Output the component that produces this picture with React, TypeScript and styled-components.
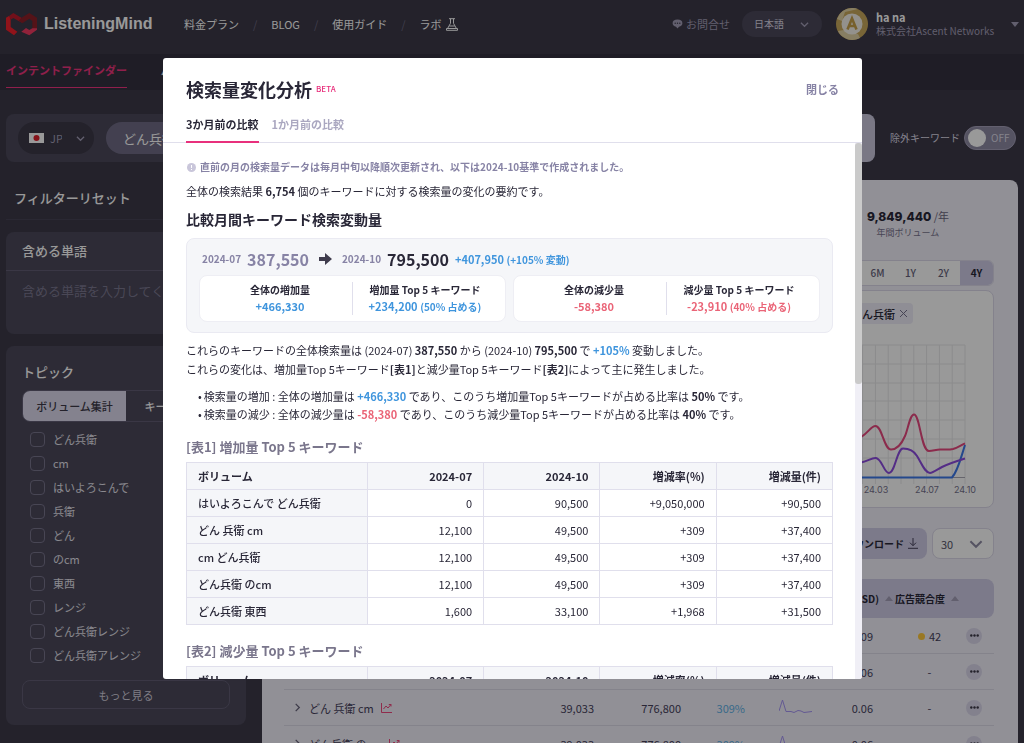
import React from 'react';
import styled, { createGlobalStyle, css } from 'styled-components';

const color = {
  page: '#3c3948',
  pageDeep: '#343140',
  panel: '#4b485a',
  line: '#615d74',
  muted: '#a39eb7',
  lilac: '#dcd9ed',
  accent: '#e8307c',
  ink: '#292737',
  violet: '#8783a5',
  up: '#3f95dd',
  down: '#ea6477',
  soft: '#f5f6f9',
  rule: '#e0dfec',
};

const GlobalStyle = createGlobalStyle`
  *, *::before, *::after { box-sizing: border-box; }
  html, body { margin: 0; height: 100%; overflow: hidden; }
  body {
    background: ${color.page};
    color: #fff;
    font: 11px/16px "Noto Sans CJK JP", "Noto Sans", sans-serif;
  }
  button, input, select, textarea { font: inherit; color: inherit; margin: 0; }
  button { border: 0; padding: 0; background: none; cursor: pointer; }
  a { color: inherit; text-decoration: none; }
  h1, h2, h3, p, ul { margin: 0; padding: 0; }
`;

/* ---------- top bar ---------- */

const TopBar = styled.header`
  display: flex;
  align-items: center;
  height: 54px;
  padding: 0 5px 6px 6px;
`;

const Brand = styled.a`
  display: flex;
  align-items: center;
  gap: 6px;
  width: 178px;
  font: bold 16px/20px "Liberation Sans", sans-serif;
`;

const TopNav = styled.nav`
  display: flex;
  align-items: center;
  gap: 14px;
  flex: 1;
  white-space: nowrap;
`;

const Slash = styled.span`
  color: #6c6880;
`;

const LabLink = styled.a`
  display: flex;
  align-items: center;
  gap: 4px;
`;

const Contact = styled.a`
  display: flex;
  align-items: center;
  gap: 3px;
  margin-right: 12px;
  color: ${color.muted};
`;

const PickWrap = styled.label`
  position: relative;
  display: flex;
  align-items: center;
`;

const PickIcon = styled.span<{ $right: number }>`
  position: absolute;
  right: ${(p) => p.$right}px;
  display: flex;
  pointer-events: none;
`;

const LanguageSelect = styled.select`
  appearance: none;
  width: 80px;
  height: 26px;
  padding: 0 12px;
  border: 0;
  border-radius: 13px;
  background: ${color.panel};
  color: #dddae8;
  font-size: 10px;
`;

const Account = styled.button`
  display: flex;
  align-items: center;
  gap: 8px;
  margin-left: 14px;
  text-align: left;
`;

const AccountName = styled.strong`
  display: block;
  font-size: 11px;
  line-height: 14px;
`;

const AccountOrg = styled.span`
  display: block;
  width: 127px;
  color: ${color.muted};
  font-size: 10px;
  line-height: 14px;
`;

/* ---------- product tabs + search ---------- */

const ProductTabs = styled.nav`
  display: flex;
  gap: 34px;
  height: 36px;
  padding: 0 6px;
  background: ${color.pageDeep};
`;

const ProductTab = styled.a<{ $active?: boolean }>`
  height: 34px;
  line-height: 32px;
  font-weight: bold;
  color: ${(p) => (p.$active ? '#f0357f' : '#fff')};
  border-bottom: 1px solid ${(p) => (p.$active ? '#f0357f' : 'transparent')};
`;

const SearchRow = styled.div`
  display: flex;
  align-items: center;
  gap: 15px;
  padding: 24px 8px 18px 6px;
`;

const SearchBox = styled.form`
  display: flex;
  align-items: center;
  gap: 12px;
  flex: 1;
  height: 48px;
  padding-left: 12px;
  border-radius: 8px;
  background: ${color.panel};
  overflow: hidden;
`;

const CountrySelect = styled.select`
  appearance: none;
  width: 76px;
  height: 32px;
  padding: 0 32px;
  border: 0;
  border-radius: 16px;
  background: ${color.page};
  color: ${color.muted};
`;

const Flag = styled.svg`
  position: absolute;
  left: 11px;
`;

const SearchInput = styled.input`
  flex: 1;
  height: 32px;
  padding: 0 17px;
  border: 0;
  border-radius: 16px;
  background: #706c86;
  font-size: 13px;
`;

const SearchButton = styled.button`
  width: 56px;
  height: 48px;
  background: #cbc8de;
`;

const Exclude = styled.label`
  display: flex;
  align-items: center;
  gap: 4px;
  font-size: 10px;
  white-space: nowrap;
  color: #dddae8;
`;

const Switch = styled.span`
  display: flex;
  align-items: center;
  gap: 5px;
  width: 52px;
  height: 24px;
  padding: 0 3px;
  border: 1px solid #a5a1ba;
  border-radius: 12px;
  background: #8e8aa3;
`;

const SwitchInput = styled.input`
  appearance: none;
  width: 18px;
  height: 18px;
  border-radius: 9px;
  background: #fff;
`;

/* ---------- sidebar ---------- */

const Columns = styled.div`
  display: flex;
  align-items: flex-start;
  gap: 16px;
  padding: 0 6px;
`;

const Sidebar = styled.aside`
  display: flex;
  flex-direction: column;
  gap: 12px;
  width: 240px;
`;

const ResetBar = styled.div`
  height: 40px;
  padding: 0 8px;
  border-bottom: 1px solid #474455;
`;

const ResetButton = styled.button`
  font-size: 13px;
  font-weight: 500;
  line-height: 36px;
`;

const Panel = styled.section`
  border-radius: 8px;
  background: ${color.panel};
`;

const PanelTitle = styled.h2`
  font-size: 13px;
  font-weight: 500;
  line-height: 20px;
`;

const IncludeHead = styled.div`
  padding: 9px 16px;
  border-bottom: 1px solid ${color.line};
`;

const IncludeInput = styled.textarea`
  display: block;
  width: 100%;
  height: 63px;
  padding: 10px 16px;
  border: 0;
  resize: none;
  overflow: hidden;
  background: none;
  font-size: 13px;
  line-height: 20px;
  white-space: nowrap;
  &::placeholder { color: #7c7890; }
`;

const TopicPanel = styled(Panel)`
  padding: 16px;
`;

const Segments = styled.div`
  display: flex;
  height: 32px;
  margin: 8px 0 5px;
  border: 1px solid ${color.line};
  border-radius: 8px;
  overflow: hidden;
`;

const Segment = styled.button<{ $active?: boolean }>`
  flex: 1;
  font-weight: 500;
  ${(p) => p.$active && css`
    background: ${color.lilac};
    color: #3c3948;
  `}
`;

const Topic = styled.label`
  display: flex;
  align-items: center;
  gap: 8px;
  height: 24px;
  padding-left: 8px;
  color: #e6e4ee;
`;

const Check = styled.input`
  appearance: none;
  width: 15px;
  height: 15px;
  border: 1px solid #79758d;
  border-radius: 4px;
`;

const MoreButton = styled.button`
  display: block;
  width: 100%;
  height: 29px;
  margin-top: 13px;
  border: 1px solid ${color.line};
  border-radius: 8px;
  color: #d3d0de;
`;

/* ---------- results ---------- */

const Results = styled.main`
  flex: 1;
  display: flex;
  flex-direction: column;
  align-items: flex-end;
  padding: 26px 24px 40px 22px;
  border-radius: 8px;
  background: #f2f0fa;
  color: ${color.ink};
`;

const Stat = styled.div`
  margin-right: 45px;
  text-align: center;
`;

const StatValue = styled.div`
  font: 11px/20px "Noto Sans CJK JP", sans-serif;
  color: #6c6880;
  strong { font: 800 12px/20px Inter, sans-serif; color: ${color.ink}; }
`;

const StatLabel = styled.div`
  font-size: 9px;
  line-height: 12px;
  color: #77738e;
`;

const Periods = styled.div`
  display: flex;
  height: 26px;
  margin: 21px 0 4px;
  border: 1px solid #dcd9ea;
  border-radius: 6px;
  background: #fff;
  overflow: hidden;
`;

const Period = styled.button<{ $active?: boolean }>`
  width: 33px;
  font-size: 10px;
  font-weight: 500;
  color: ${(p) => (p.$active ? color.ink : '#66627a')};
  background: ${(p) => (p.$active ? '#cfcce6' : 'none')};
  ${(p) => p.$active && css`font-weight: bold;`}
`;

const ChartCard = styled.section`
  display: flex;
  flex-direction: column;
  align-items: flex-end;
  align-self: stretch;
  padding: 12px 0 6px;
  border: 1px solid #dcd9ea;
  border-radius: 8px;
  background: #fff;
`;

const Chip = styled.span`
  display: flex;
  align-items: center;
  gap: 4px;
  height: 21px;
  margin: 0 80px 15px 0;
  padding: 0 5px 0 8px;
  border-radius: 4px;
  background: #efedf8;
  font-weight: 500;
`;

const ChartSpace = styled.div`
  display: flex;
  margin-right: 8px;
`;

const IconButton = styled.button`
  display: flex;
`;

const Toolbar = styled.div`
  display: flex;
  gap: 5px;
  margin: 20px 0;
`;

const DownloadButton = styled.button`
  display: flex;
  align-items: center;
  gap: 4px;
  height: 31px;
  padding: 0 9px 0 12px;
  border-radius: 8px;
  background: #cfcce6;
  font-size: 10px;
  font-weight: bold;
`;

const SizeSelect = styled.select`
  appearance: none;
  width: 62px;
  height: 31px;
  padding: 0 8px;
  border: 1px solid #dcd9ea;
  border-radius: 8px;
  background: #fff;
  font-size: 11px;
  color: #575368;
`;

const ResultTable = styled.table`
  width: 100%;
  table-layout: fixed;
  border-spacing: 0;
  white-space: nowrap;
  thead th {
    height: 39px;
    padding: 0;
    background: #cfcce6;
    font-size: 10px;
    text-align: left;
  }
  thead th:first-child { border-radius: 8px 0 0 8px; padding-left: 24px; }
  thead th:last-child { border-radius: 0 8px 8px 0; }
  tbody td {
    height: 36px;
    padding: 0;
    border-bottom: 1px solid #dddbe8;
    color: #45415a;
    text-align: right;
  }
  tbody td:first-child { text-align: left; }
`;

const KeywordCell = styled.div`
  display: flex;
  align-items: center;
  gap: 7px;
  padding-left: 9px;
`;

const Rise = styled.td`
  && { color: #5fb0e6; }
`;

const SparkCell = styled.td`
  && { text-align: center; }
`;

const CpcCell = styled.td`
  && { padding-right: 20px; }
`;

const CpcHead = styled.th`
  direction: rtl;
`;

const HeadLabel = styled.span`
  display: inline-flex;
  align-items: center;
  gap: 6px;
  direction: ltr;
  padding-left: 2px;
`;

const RankCell = styled.td`
  && { text-align: center; }
`;

const Rank = styled.span`
  display: inline-flex;
  align-items: center;
  gap: 4px;
`;

const Dot = styled.i`
  width: 7px;
  height: 7px;
  border-radius: 4px;
  background: #ffc93c;
`;

const MenuButton = styled.button`
  display: flex;
  align-items: center;
  justify-content: center;
  width: 16px;
  height: 16px;
  border-radius: 8px;
  background: #dbd8ec;
`;

/* ---------- dialog ---------- */

const Backdrop = styled.div`
  position: fixed;
  inset: 0;
  display: flex;
  justify-content: center;
  padding: 58px 20px 64px 21px;
  background: rgba(0, 0, 0, 0.4);
`;

const Dialog = styled.section`
  display: flex;
  flex-direction: column;
  width: 100%;
  max-width: 699px;
  border-radius: 3px;
  background: #fff;
  color: ${color.ink};
  overflow: hidden;
`;

const DialogHead = styled.div`
  display: flex;
  align-items: center;
  gap: 4px;
  padding: 18px 23px 0;
`;

const DialogTitle = styled.h1`
  font-size: 18px;
  line-height: 26px;
`;

const Beta = styled.span`
  flex: 1;
  color: ${color.accent};
  font-size: 8px;
  font-weight: 500;
`;

const CloseButton = styled.button`
  color: ${color.violet};
  font-weight: bold;
`;

const CompareTabs = styled.div`
  display: flex;
  gap: 13px;
  height: 41px;
  padding: 0 23px;
  border-bottom: 1px solid ${color.rule};
`;

const CompareTab = styled.button<{ $active?: boolean }>`
  height: 41px;
  padding-top: 4px;
  border-bottom: 2px solid ${(p) => (p.$active ? color.accent : 'transparent')};
  color: ${(p) => (p.$active ? color.ink : '#aaa7c0')};
  font-weight: bold;
`;

const DialogBody = styled.div`
  display: flex;
  flex: 1;
  min-height: 0;
`;

const Scroller = styled.div`
  flex: 1;
  min-width: 0;
  padding: 16px 22px 24px 23px;
  overflow-y: auto;
  scrollbar-width: none;
`;

const Track = styled.div`
  width: 7px;
  background: #f0eff6;
`;

const Thumb = styled.div`
  height: 45%;
  border-radius: 3px;
  background: #cacaca;
`;

const Notice = styled.p`
  display: flex;
  align-items: center;
  gap: 4px;
  color: ${color.violet};
  font-size: 10px;
  font-weight: bold;
  svg { margin-left: 1px; }
`;

const Lead = styled.p`
  margin-top: 8px;
`;

const SectionTitle = styled.h2`
  margin: 9px 0 8px;
  font-size: 14px;
  line-height: 22px;
`;

const Summary = styled.div`
  padding: 10px 12px;
  border: 1px solid #eaeaf2;
  border-radius: 8px;
  background: ${color.soft};
`;

const SummaryRow = styled.div`
  display: flex;
  align-items: center;
  height: 20px;
  padding-left: 3px;
  margin-bottom: 6px;
  font-weight: bold;
`;

const Month = styled.span`
  margin-right: 6px;
  color: ${color.violet};
  font-size: 10px;
`;

const Total = styled.span<{ $past?: boolean }>`
  color: ${(p) => (p.$past ? color.violet : color.ink)};
  font-size: 16px;
`;

const ArrowBox = styled.span`
  display: flex;
  margin: 0 10px;
`;

const Delta = styled.span<{ $tone: 'up' | 'down'; $gap?: boolean }>`
  color: ${(p) => color[p.$tone]};
  font-weight: bold;
  ${(p) => p.$gap && css`margin-left: 6px;`}
  small { font-size: 10px; }
`;

const Cards = styled.div`
  display: flex;
  gap: 7px;
`;

const Card = styled.div`
  display: flex;
  flex: 1;
  padding: 6px 8px;
  border: 1px solid #eeeef4;
  border-radius: 8px;
  background: #fff;
`;

const CardCell = styled.div`
  flex: 1;
  text-align: center;
  & + & { border-left: 1px solid ${color.rule}; }
`;

const CardLabel = styled.div`
  font-size: 10px;
  font-weight: bold;
`;

const Story = styled.div`
  margin-top: 8px;
  line-height: 19px;
`;

const Points = styled.ul`
  margin: 8px 0 14px 12px;
  line-height: 18px;
  list-style: none;
  li::before { content: '•'; margin-right: 2px; }
`;

const TableTitle = styled.h3`
  margin-bottom: 5px;
  color: #7a768c;
  font-size: 13px;
  font-weight: bold;
  line-height: 20px;
`;

const DataTable = styled.table`
  width: 100%;
  margin-bottom: 16px;
  table-layout: fixed;
  border-collapse: collapse;
  th, td {
    width: 18%;
    height: 27px;
    padding: 0 11px;
    border: 1px solid ${color.rule};
    line-height: 16px;
    text-align: right;
  }
  thead th { background: ${color.soft}; }
  th:first-child { width: 28%; text-align: left; }
  tbody th { background: ${color.soft}; font-weight: 500; }
`;

/* ---------- drawings ---------- */

const Logo = () => (
  <svg width="32" height="23" viewBox="0 0 96 69" aria-hidden="true">
    <path d="M0 14 10 8 14 20 14 42 34 56 24 67 0 50Z" fill="#f0202c" />
    <path d="M10 8 22 0 46 14 50 30 38 24 22 15 14 20Z" fill="#c01c2c" />
    <path d="M46 14 70 0 93 14 93 46 79 52 79 24 70 17 50 30 38 24Z" fill="#8c2028" />
    <path d="M93 46 93 50 70 67 46 56 60 45 70 51 79 46Z" fill="#f23a62" />
  </svg>
);

const Flask = () => (
  <svg width="12" height="13" viewBox="0 0 12 13" fill="none" stroke="#fff" aria-hidden="true">
    <path d="M3 .7h6M4.500 .7v4.600L1.300 11M7.500 .7v4.600L10.700 11M3.300 8h5.400" />
    <path d="M.5 10.500h11v1.800H.5z" />
  </svg>
);

const Chat = () => (
  <svg width="11" height="10" viewBox="0 0 11 10" aria-hidden="true">
    <path d="M5.500.6C2.300.6.600 2 .600 4.200.600 6 2 7.300 4 7.700L5.500 9.500 7 7.700C9 7.300 10.400 6 10.400 4.200 10.400 2 8.700.6 5.500.6Z" fill="#a39eb7" />
    <circle cx="3.200" cy="4.200" r=".7" fill="#3c3948" />
    <circle cx="5.500" cy="4.200" r=".7" fill="#3c3948" />
    <circle cx="7.800" cy="4.200" r=".7" fill="#3c3948" />
  </svg>
);

const Chevron = ({ size = 9, stroke = '#a39eb7', turn = false }) => (
  <svg width={size} height={size} viewBox="0 0 10 10" fill="none" stroke={stroke} strokeWidth="1.400" aria-hidden="true">
    <path d={turn ? 'M3 1l4 4-4 4' : 'M1 3l4 4 4-4'} />
  </svg>
);

const Avatar = () => (
  <svg width="32" height="32" viewBox="0 0 32 32" aria-hidden="true">
    <circle cx="16" cy="16" r="16" fill="#c9a85c" />
    <path d="M16 0A16 16 0 0 0 1 11l5 2 3-9 13-3A16 16 0 0 0 16 0ZM2 23a16 16 0 0 0 22 7l-2-4-14-4Z" fill="#e2d3a6" />
    <circle cx="16" cy="16" r="10.500" fill="#f6f2ea" />
    <path d="M11.500 21.500 16 10.500l4.500 11M13 18h6" fill="none" stroke="#c6a04a" strokeWidth="2.600" />
  </svg>
);

const Caret = ({ up = false, fill = '#a39eb7' }) => (
  <svg width="8" height="5" viewBox="0 0 8 5" aria-hidden="true">
    <path d={up ? 'M0 5l4-5 4 5z' : 'M0 0l4 5 4-5z'} fill={fill} />
  </svg>
);

const Alert = () => (
  <svg width="9" height="9" viewBox="0 0 9 9" aria-hidden="true">
    <circle cx="4.500" cy="4.500" r="4.500" fill="#c9c6da" />
    <path d="M4.500 2v3M4.500 6v1" stroke="#fff" />
  </svg>
);

const Arrow = () => (
  <svg width="13" height="12" viewBox="0 0 13 12" aria-hidden="true">
    <path d="M0 4h6V0l7 6-7 6V8H0z" fill="#3f3c4d" />
  </svg>
);

const Cross = () => (
  <svg width="9" height="9" viewBox="0 0 9 9" stroke="#77738e" aria-hidden="true">
    <path d="M1 1l7 7M8 1L1 8" />
  </svg>
);

const Download = () => (
  <svg width="10" height="11" viewBox="0 0 10 11" fill="none" stroke="#45415a" aria-hidden="true">
    <path d="M5 0v7.500M2 4.700l3 3 3-3M0 10.300h10" />
  </svg>
);

const TrendIcon = () => (
  <svg width="11" height="10" viewBox="0 0 11 10" fill="none" stroke="#f0487f" aria-hidden="true">
    <path d="M.5 0v9.500H11" />
    <path d="M2.500 6l2.500-3 2 2L10 1.500M7.800 1.500H10v2" />
  </svg>
);

const Dots = () => (
  <svg width="9" height="3" viewBox="0 0 9 3" fill="#3c3948" aria-hidden="true">
    <circle cx="1.300" cy="1.500" r="1.200" />
    <circle cx="4.500" cy="1.500" r="1.200" />
    <circle cx="7.700" cy="1.500" r="1.200" />
  </svg>
);

const Spark = () => (
  <svg width="33" height="15" viewBox="0 0 33 15" fill="none" stroke="#a594f5" aria-hidden="true">
    <path d="M0 12 3.500 1 7 12.500H12L15 13.500 19 11.500 22 12 25 13.500 33 12.500" />
  </svg>
);

const verticals = Array.from({ length: 16 }, (_, i) => 8 + i * 12.8);
const horizontals = [6, 25, 44, 62, 81, 100, 119];

const Chart = () => (
  <svg width="220" height="162" viewBox="0 0 220 162" fill="none" aria-label="検索ボリューム推移">
    {verticals.map((x) => <path key={x} d={`M${x} 6V145`} stroke="#e8e8ea" />)}
    {horizontals.map((y) => <path key={y} d={`M8 ${y}H200`} stroke="#e8e8ea" />)}
    <path d="M8 138.500H200" stroke="#aaa8b4" />
    <path d="M8 138.500H187C193 132 196 118 200 106" stroke="#3d78ea" strokeWidth="2" />
    <path d="M60 120C75 128 85 126 97 123.300 103 122 107 118.500 111 119 117 120 119 134 124 134 130 134 132 109.500 138 109.500 144 109.500 149 112 152 117 157 125 160 134 165 134 168 134 173 130 177 128 183 125 192 122 200 119.500" stroke="#8c4be0" strokeWidth="2" />
    <path d="M60 90C75 100 88 101 97 97.300 103 94 106 87 110.500 87 117 87 119 110.500 126 110.500 132 110.500 137 104 140 97 143 90 145 75.500 149 75.500 155 75.500 156 112 164 112 168 112 171 110.500 175 110.500 180 110.500 184 111 188 110 193 108.500 196 106 200 104.500" stroke="#e8487f" strokeWidth="2" />
    <g fill="#77738e" fontFamily="Inter, sans-serif" fontSize="9" textAnchor="middle">
      <text x="111" y="154">24.03</text>
      <text x="162" y="154">24.07</text>
      <text x="200" y="154">24.10</text>
    </g>
  </svg>
);

/* ---------- data ---------- */

const topics = ['どん兵衛', 'cm', 'はいよろこんで', '兵衛', 'どん', 'のcm', '東西', 'レンジ', 'どん兵衛レンジ', 'どん兵衛アレンジ'];

const results = [
  { name: 'はいよろこんで どん兵衛', avg: '45,254', total: '905,300', rise: '9,999%', cpc: '0.09', rank: '42' },
  { name: 'どん兵衛', avg: '39,033', total: '776,800', rise: '309%', cpc: '0.06', rank: '' },
  { name: 'どん 兵衛 cm', avg: '39,033', total: '776,800', rise: '309%', cpc: '0.06', rank: '' },
  { name: 'どん兵衛 のcm', avg: '39,033', total: '776,800', rise: '309%', cpc: '0.06', rank: '' },
];

const increases = [
  ['はいよろこんで どん兵衛', '0', '90,500', '+9,050,000', '+90,500'],
  ['どん 兵衛 cm', '12,100', '49,500', '+309', '+37,400'],
  ['cm どん兵衛', '12,100', '49,500', '+309', '+37,400'],
  ['どん兵衛 のcm', '12,100', '49,500', '+309', '+37,400'],
  ['どん兵衛 東西', '1,600', '33,100', '+1,968', '+31,500'],
];

const decreases = [['どん兵衛', '201,000', '177,090', '-12', '-23,910']];

const ChangeTable = ({ rows }: { rows: string[][] }) => (
  <DataTable>
    <thead>
      <tr>
        {['ボリューム', '2024-07', '2024-10', '増減率(%)', '増減量(件)'].map((h) => <th key={h} scope="col">{h}</th>)}
      </tr>
    </thead>
    <tbody>
      {rows.map(([name, ...values]) => (
        <tr key={name}>
          <th scope="row">{name}</th>
          {values.map((v, i) => <td key={i}>{v}</td>)}
        </tr>
      ))}
    </tbody>
  </DataTable>
);

const Header = () => (
  <TopBar>
    <Brand href="#"><Logo />ListeningMind</Brand>
    <TopNav>
      <a href="#">料金プラン</a><Slash>/</Slash>
      <a href="#">BLOG</a><Slash>/</Slash>
      <a href="#">使用ガイド</a><Slash>/</Slash>
      <LabLink href="#">ラボ<Flask /></LabLink>
    </TopNav>
    <Contact href="#"><Chat />お問合せ</Contact>
    <PickWrap>
      <LanguageSelect aria-label="言語"><option>日本語</option></LanguageSelect>
      <PickIcon $right={13}><Chevron /></PickIcon>
    </PickWrap>
    <Account>
      <Avatar />
      <span><AccountName>ha na</AccountName><AccountOrg>株式会社Ascent Networks</AccountOrg></span>
      <Caret />
    </Account>
  </TopBar>
);

const Filters = () => (
  <Sidebar>
    <ResetBar><ResetButton>フィルターリセット</ResetButton></ResetBar>
    <Panel>
      <IncludeHead><PanelTitle as="label" htmlFor="include">含める単語</PanelTitle></IncludeHead>
      <IncludeInput id="include" placeholder="含める単語を入力してください" />
    </Panel>
    <TopicPanel>
      <PanelTitle>トピック</PanelTitle>
      <Segments><Segment $active>ボリューム集計</Segment><Segment>キーワード数</Segment></Segments>
      {topics.map((t) => <Topic key={t}><Check type="checkbox" />{t}</Topic>)}
      <MoreButton>もっと見る</MoreButton>
    </TopicPanel>
  </Sidebar>
);

const ResultArea = () => (
  <Results>
    <Stat>
      <StatValue><strong>9,849,440</strong> /年</StatValue>
      <StatLabel>年間ボリューム</StatLabel>
    </Stat>
    <Periods>
      {['3M', '6M', '1Y', '2Y', '4Y'].map((p) => <Period key={p} $active={p === '4Y'}>{p}</Period>)}
    </Periods>
    <ChartCard>
      <Chip>どん兵衛<IconButton aria-label="削除"><Cross /></IconButton></Chip>
      <ChartSpace><Chart /></ChartSpace>
    </ChartCard>
    <Toolbar>
      <DownloadButton>ダウンロード<Download /></DownloadButton>
      <PickWrap>
        <SizeSelect aria-label="表示件数"><option>30</option></SizeSelect>
        <PickIcon $right={11}><Chevron size={14} stroke="#8e8aa3" /></PickIcon>
      </PickWrap>
    </Toolbar>
    <ResultTable>
      <colgroup>
        <col /><col width="70" /><col width="87" /><col width="64" /><col width="100" /><col width="48" /><col width="73" /><col width="28" />
      </colgroup>
      <thead>
        <tr>
          <th>キーワード</th><th /><th /><th /><th />
          <CpcHead><HeadLabel>CPC(USD)<Caret up /></HeadLabel></CpcHead>
          <th><HeadLabel>広告競合度<Caret up /></HeadLabel></th>
          <th />
        </tr>
      </thead>
      <tbody>
        {results.map((r) => (
          <tr key={r.name}>
            <td><KeywordCell><Chevron turn stroke="#66627a" />{r.name}<TrendIcon /></KeywordCell></td>
            <td>{r.avg}</td>
            <td>{r.total}</td>
            <Rise>{r.rise}</Rise>
            <SparkCell><Spark /></SparkCell>
            <CpcCell>{r.cpc}</CpcCell>
            <RankCell>{r.rank ? <Rank><Dot />{r.rank}</Rank> : '-'}</RankCell>
            <td><MenuButton aria-label="メニュー"><Dots /></MenuButton></td>
          </tr>
        ))}
      </tbody>
    </ResultTable>
  </Results>
);

const ChangeDialog = () => (
  <Backdrop>
    <Dialog role="dialog" aria-modal="true" aria-labelledby="dialog-title">
      <DialogHead>
        <DialogTitle id="dialog-title">検索量変化分析</DialogTitle>
        <Beta>BETA</Beta>
        <CloseButton>閉じる</CloseButton>
      </DialogHead>
      <CompareTabs role="tablist">
        <CompareTab role="tab" aria-selected $active>3か月前の比較</CompareTab>
        <CompareTab role="tab">1か月前の比較</CompareTab>
      </CompareTabs>
      <DialogBody>
        <Scroller>
          <Notice><Alert />直前の月の検索量データは毎月中旬以降順次更新され、以下は2024-10基準で作成されました。</Notice>
          <Lead>全体の検索結果 <strong>6,754</strong> 個のキーワードに対する検索量の変化の要約です。</Lead>
          <SectionTitle>比較月間キーワード検索変動量</SectionTitle>
          <Summary>
            <SummaryRow>
              <Month>2024-07</Month><Total $past>387,550</Total>
              <ArrowBox><Arrow /></ArrowBox>
              <Month>2024-10</Month><Total>795,500</Total>
              <Delta $tone="up" $gap>+407,950 <small>(+105% 変動)</small></Delta>
            </SummaryRow>
            <Cards>
              <Card>
                <CardCell><CardLabel>全体の増加量</CardLabel><Delta $tone="up">+466,330</Delta></CardCell>
                <CardCell><CardLabel>増加量 Top 5 キーワード</CardLabel><Delta $tone="up">+234,200 <small>(50% 占める)</small></Delta></CardCell>
              </Card>
              <Card>
                <CardCell><CardLabel>全体の減少量</CardLabel><Delta $tone="down">-58,380</Delta></CardCell>
                <CardCell><CardLabel>減少量 Top 5 キーワード</CardLabel><Delta $tone="down">-23,910 <small>(40% 占める)</small></Delta></CardCell>
              </Card>
            </Cards>
          </Summary>
          <Story>
            <p>これらのキーワードの全体検索量は (2024-07) <strong>387,550</strong> から (2024-10) <strong>795,500</strong> で <Delta $tone="up">+105%</Delta> 変動しました。</p>
            <p>これらの変化は、増加量Top 5キーワード<strong>[表1]</strong>と減少量Top 5キーワード<strong>[表2]</strong>によって主に発生しました。</p>
          </Story>
          <Points>
            <li>検索量の増加 : 全体の増加量は <Delta $tone="up">+466,330</Delta> であり、このうち増加量Top 5キーワードが占める比率は <strong>50%</strong> です。</li>
            <li>検索量の減少 : 全体の減少量は <Delta $tone="down">-58,380</Delta> であり、このうち減少量Top 5キーワードが占める比率は <strong>40%</strong> です。</li>
          </Points>
          <TableTitle>[表1] 増加量 Top 5 キーワード</TableTitle>
          <ChangeTable rows={increases} />
          <TableTitle>[表2] 減少量 Top 5 キーワード</TableTitle>
          <ChangeTable rows={decreases} />
        </Scroller>
        <Track><Thumb /></Track>
      </DialogBody>
    </Dialog>
  </Backdrop>
);

const SearchBar = () => (
  <SearchRow>
    <SearchBox>
      <PickWrap>
        <CountrySelect aria-label="国"><option>JP</option></CountrySelect>
        <Flag width="15" height="10" viewBox="0 0 15 10" aria-hidden="true">
          <rect width="15" height="10" fill="#fff" />
          <circle cx="7.500" cy="5" r="3" fill="#e0202c" />
        </Flag>
        <PickIcon $right={9}><Chevron /></PickIcon>
      </PickWrap>
      <SearchInput aria-label="キーワード" defaultValue="どん兵衛" />
      <SearchButton type="button" aria-label="検索" />
    </SearchBox>
    <Exclude>
      除外キーワード
      <Switch><SwitchInput type="checkbox" role="switch" />OFF</Switch>
    </Exclude>
  </SearchRow>
);

export default function App() {
  return (
    <>
      <GlobalStyle />
      <Header />
      <ProductTabs>
        <ProductTab href="#" $active>インテントファインダー</ProductTab>
        <ProductTab href="#">パスファインダー</ProductTab>
      </ProductTabs>
      <SearchBar />
      <Columns>
        <Filters />
        <ResultArea />
      </Columns>
      <ChangeDialog />
    </>
  );
}
